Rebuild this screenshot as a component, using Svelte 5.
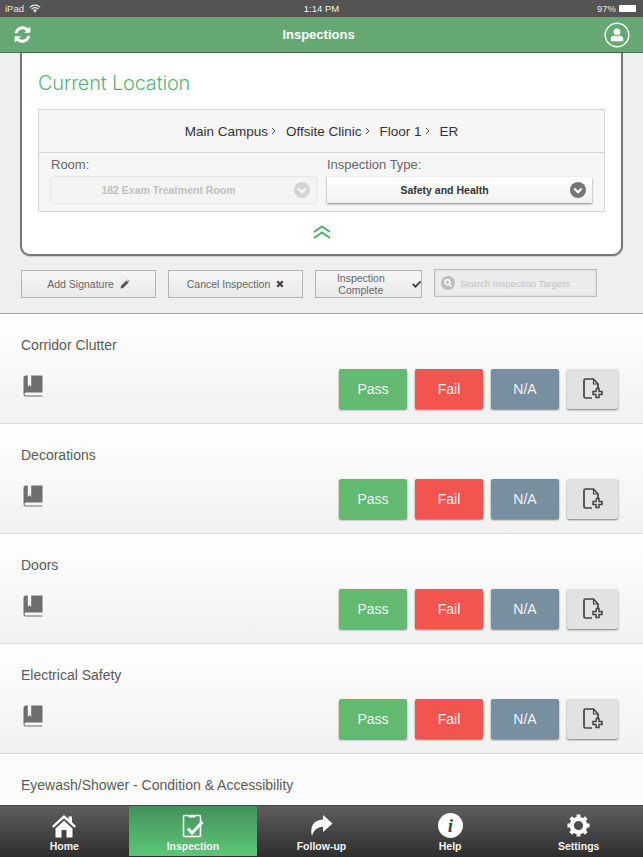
<script>
	const crumbs = ['Main Campus', 'Offsite Clinic', 'Floor 1', 'ER'];
	const targets = ['Corridor Clutter', 'Decorations', 'Doors', 'Electrical Safety'];
	const tabs = ['Home', 'Inspection', 'Follow-up', 'Help', 'Settings'];
</script>

<div class="screen">
	<div class="status">
		<div class="status-left">
			<span>iPad</span>
			<svg class="wifi" viewBox="0 0 14 10" width="12" height="9">
				<path d="M1 3.6a8.5 8.5 0 0 1 12 0M3 5.6a5.6 5.6 0 0 1 8 0M5 7.4a2.8 2.8 0 0 1 4 0" fill="none" stroke="#eee" stroke-width="1.3" />
				<path d="M7 10L5.6 8.4a2 2 0 0 1 2.8 0z" fill="#eee" />
			</svg>
		</div>
		<span class="status-time">1:14 PM</span>
		<div class="status-right">
			<span>97%</span>
			<span class="battery"><span class="battery-fill"></span></span>
		</div>
	</div>

	<header class="header">
		<svg class="sync" viewBox="0 0 24 24" width="21" height="21">
			<path d="M3 10.5C4 5.5 8 2.5 12.2 2.5c2.7 0 4.8 1 6.4 2.6L21 2.800V10h-7.200l2.400-2.400c-1-1-2.400-1.700-4-1.700-2.800 0-5 1.700-5.800 4.600z" fill="#fff" />
			<path d="M21 13.500C20 18.500 16 21.500 11.800 21.500c-2.700 0-4.800-1-6.400-2.600L3 21.200V14h7.200l-2.400 2.400c1 1 2.400 1.700 4 1.700 2.800 0 5-1.700 5.800-4.600z" fill="#fff" />
		</svg>
		<h1>Inspections</h1>
		<svg class="user" viewBox="0 0 26 26" width="26" height="26">
			<circle cx="13" cy="13" r="11.800" fill="none" stroke="#fff" stroke-width="1.400" />
			<circle cx="13" cy="9.800" r="3.400" fill="#fff" />
			<path d="M6.800 19.200v-2.400c0-2.400 2-3.400 3.600-3.400 1.600 1.200 3.600 1.200 5.200 0 1.600 0 3.600 1 3.600 3.400v2.400z" fill="#fff" />
		</svg>
	</header>

	<section class="top">
		<div class="card">
			<h2>Current Location</h2>
			<div class="location">
				<div class="crumbs">
					{#each crumbs as crumb, i}
						<span class="crumb">{crumb}</span>
						{#if i < crumbs.length - 1}
							<svg class="crumb-sep" viewBox="0 0 5 8" width="5" height="8">
								<path d="M1 1l3 3-3 3" fill="none" stroke="#555" stroke-width="1" />
							</svg>
						{/if}
					{/each}
				</div>
				<div class="selects">
					<div class="field">
						<span class="field-label">Room:</span>
						<div class="select disabled">
							<span>182 Exam Treatment Room</span>
							<svg viewBox="0 0 16 16" width="16" height="16">
								<circle cx="8" cy="8" r="8" fill="#d4d4d4" />
								<path d="M4.300 6.500L8 10.200l3.700-3.700" fill="none" stroke="#fff" stroke-width="2.200" />
							</svg>
						</div>
					</div>
					<div class="field">
						<span class="field-label">Inspection Type:</span>
						<div class="select">
							<span>Safety and Health</span>
							<svg viewBox="0 0 16 16" width="16" height="16">
								<circle cx="8" cy="8" r="8" fill="#757575" />
								<path d="M4.300 6.500L8 10.200l3.700-3.700" fill="none" stroke="#fff" stroke-width="2.200" />
							</svg>
						</div>
					</div>
				</div>
			</div>
			<svg class="collapse" viewBox="0 0 20 14" width="20" height="14">
				<path d="M2 7l8-5.500L18 7M2 13l8-5.500L18 13" fill="none" stroke="#4caf6a" stroke-width="2" />
			</svg>
		</div>

		<div class="actions">
			<button class="action">
				Add Signature
				<svg viewBox="0 0 12 12" width="10" height="10">
					<path d="M0.500 11.500l0.800-3.300 6.500-6.500 2.500 2.500-6.500 6.500zM8.600 0.900l0.700-0.400 2.200 2.200-0.400 0.700z" fill="#555" />
				</svg>
			</button>
			<button class="action">
				Cancel Inspection
				<svg viewBox="0 0 10 10" width="8" height="8">
					<path d="M1.500 1.500l7 7M8.500 1.500l-7 7" stroke="#444" stroke-width="2.800" />
				</svg>
			</button>
			<button class="action">
				Inspection Complete
				<svg viewBox="0 0 12 10" width="10" height="8">
					<path d="M1 5l3.500 3.500L11 1.500" fill="none" stroke="#444" stroke-width="2.400" />
				</svg>
			</button>
			<div class="search">
				<svg viewBox="0 0 14 14" width="14" height="14">
					<circle cx="7" cy="7" r="7" fill="#bdbdbd" />
					<circle cx="6.500" cy="6.300" r="2.500" fill="none" stroke="#fff" stroke-width="1.400" />
					<path d="M8.300 8.200l2 2" stroke="#fff" stroke-width="1.500" />
				</svg>
				<span>Search Inspection Targets</span>
			</div>
		</div>
	</section>

	<main class="list">
		{#each targets as target}
			<article class="row">
				<h3>{target}</h3>
				<div class="row-body">
					<svg class="book" viewBox="0 0 20 23" width="20" height="23">
						<path d="M0.500 3a2.500 2.500 0 0 1 2.500-2.500h1.800v11.500l1.700-1.900 1.700 1.900V0.500h11.300v17H3a1.500 1.500 0 0 0 0 3h16.300v1H3A2.500 2.500 0 0 1 0.500 19z" fill="#6e6e6e" />
					</svg>
					<div class="result-buttons">
						<button class="result pass">Pass</button>
						<button class="result fail">Fail</button>
						<button class="result na">N/A</button>
						<button class="result note" aria-label="Add note">
							<svg viewBox="0 0 22 24" width="22" height="24">
								<path d="M10 21H3.500A1.500 1.500 0 0 1 2 19.500v-16A1.500 1.500 0 0 1 3.500 2h8L16 7v4" fill="none" stroke="#444" stroke-width="1.700" />
								<path d="M11.500 2v5H16" fill="none" stroke="#444" stroke-width="1.200" />
								<path d="M14.500 11.500h2.500v3h3v3h-3v3h-3v-3h-3v-3h3z" fill="#e0e0e0" stroke="#444" stroke-width="1.500" />
							</svg>
						</button>
					</div>
				</div>
			</article>
		{/each}
		<article class="row last">
			<h3>Eyewash/Shower - Condition &amp; Accessibility</h3>
		</article>
	</main>

	<nav class="tabs">
		{#each tabs as tab}
			<div class="tab" class:active={tab === 'Inspection'}>
				{#if tab === 'Home'}
					<svg viewBox="0 0 26 24" width="26" height="24">
						<path d="M13 1L1 12l1.500 1.700L13 4.200l10.500 9.500L25 12l-4-3.700V2.500h-3.500v2.600z" fill="#fff" />
						<path d="M4.500 14.500L13 6.800l8.500 7.700V23.500H15.500V16h-5v7.500H4.500z" fill="#fff" />
					</svg>
				{:else if tab === 'Inspection'}
					<svg viewBox="0 0 22 26" width="22" height="26">
						<path d="M7 3.500H2.500a1 1 0 0 0-1 1V23.500a1 1 0 0 0 1 1h15a1 1 0 0 0 1-1V4.500a1 1 0 0 0-1-1H13" fill="none" stroke="#fff" stroke-width="1.500" />
						<path d="M6.500 5.500v-2.500h2.300a1.300 1.300 0 0 1 2.400 0h2.300v2.500z" fill="#fff" />
						<path d="M6 16.500l4 4.500 10.500-11" fill="none" stroke="#fff" stroke-width="3" />
					</svg>
				{:else if tab === 'Follow-up'}
					<svg viewBox="0 0 24 24" width="24" height="24">
						<path d="M14 1l9.500 8.500L14 18v-5C9 13 5 15 3 22 .5 13 4.500 6 14 5.500z" fill="#fff" />
					</svg>
				{:else if tab === 'Help'}
					<svg viewBox="0 0 25 25" width="25" height="25">
						<circle cx="12.500" cy="12.500" r="12.500" fill="#fff" />
						<text class="help-i" x="12.500" y="19" text-anchor="middle">i</text>
					</svg>
				{:else}
					<svg viewBox="0 0 26 26" width="25" height="25">
						<circle cx="13" cy="13" r="7" fill="none" stroke="#fff" stroke-width="4.400" />
						<path d="M13 13V1.500M13 13V24.500M13 13H1.500M13 13H24.500M13 13L4.900 4.900M13 13L21.100 21.100M13 13L21.100 4.900M13 13L4.900 21.100" stroke="#fff" stroke-width="4" stroke-dasharray="3.600 20" stroke-dashoffset="-8.200" />
					</svg>
				{/if}
				<span>{tab}</span>
			</div>
		{/each}
	</nav>
</div>

<style>
	:global(body) {
		margin: 0;
	}

	.screen {
		width: 643px;
		height: 857px;
		display: flex;
		flex-direction: column;
		overflow: hidden;
		background: #fff;
		font-family: 'Liberation Sans', Arial, sans-serif;
	}

	.status {
		height: 17px;
		flex: none;
		display: grid;
		grid-template-columns: 1fr auto 1fr;
		align-items: center;
		padding: 0 5px;
		background: #545454;
		color: #e8e8e8;
		font-size: 9.500px;
	}

	.status-left {
		display: flex;
		align-items: center;
		gap: 5px;
	}

	.status-time {
		color: #f2f2f2;
	}

	.status-right {
		display: flex;
		align-items: center;
		justify-content: flex-end;
		gap: 3px;
		padding-right: 2px;
	}

	.battery {
		width: 17px;
		height: 7px;
		background: #fff;
		border-radius: 1px;
	}

	.battery-fill {
		display: block;
	}

	.header {
		height: 36px;
		flex: none;
		box-sizing: border-box;
		display: flex;
		align-items: center;
		justify-content: space-between;
		padding: 0 13px 0 12px;
		background: #66a874;
		border-bottom: 1px solid #47704f;
		position: relative;
		z-index: 1;
	}

	.header h1 {
		margin: 0;
		color: #fff;
		font-size: 13px;
		font-weight: 700;
	}

	.top {
		height: 261px;
		flex: none;
		box-sizing: border-box;
		padding: 0 20px;
		background: #efefef;
		border-bottom: 1px solid #a6a6a6;
	}

	.card {
		box-sizing: border-box;
		height: 203px;
		background: #fff;
		border: 2px solid #777;
		border-top: none;
		border-radius: 0 0 10px 10px;
		box-shadow: 0 1px 1px rgba(0, 0, 0, 0.15);
		padding: 0 16px;
		display: flex;
		flex-direction: column;
	}

	.card h2 {
		margin: 18px 0 14px;
		color: #5fb07c;
		font-size: 20px;
		font-weight: 400;
		font-family: Inter, 'Liberation Sans', sans-serif;
		font-weight: 300;
		line-height: 24px;
		letter-spacing: -0.2px;
	}

	.location {
		box-sizing: border-box;
		height: 103px;
		background: #f6f6f6;
		border: 1px solid #d6d6d6;
	}

	.crumbs {
		height: 43px;
		box-sizing: border-box;
		border-bottom: 1px solid #d6d6d6;
		display: flex;
		align-items: center;
		justify-content: center;
		color: #333;
		font-size: 13.500px;
	}

	.crumb-sep {
		margin: 0 10px 0 3px;
	}

	.selects {
		display: flex;
		padding: 0 12px;
		gap: 11px;
	}

	.field {
		flex: 1;
		min-width: 0;
	}

	.field-label {
		display: block;
		margin-top: 4px;
		color: #666;
		font-size: 13px;
		line-height: 16px;
	}

	.select {
		box-sizing: border-box;
		margin-top: 4px;
		height: 26px;
		display: flex;
		align-items: center;
		justify-content: center;
		position: relative;
		padding-right: 30px;
		background: linear-gradient(#fff, #f1f1f1);
		box-shadow: 0 1px 2px rgba(0, 0, 0, 0.45);
		color: #333;
		font-size: 10.500px;
		font-weight: 700;
	}

	.select svg {
		position: absolute;
		right: 6px;
		top: 5px;
	}

	.select.disabled {
		color: #c0c0c0;
		background: #f4f4f4;
		box-shadow: 0 0 2px rgba(0, 0, 0, 0.18);
	}

	.collapse {
		align-self: center;
		margin-top: 13px;
	}

	.actions {
		display: flex;
		align-items: flex-start;
		margin: 14px 0 0 1px;
		gap: 12px;
	}

	.action {
		box-sizing: border-box;
		width: 135px;
		height: 28px;
		padding: 0;
		display: flex;
		align-items: center;
		justify-content: center;
		gap: 6px;
		border: 1px solid #b4b4b4;
		background: linear-gradient(#f6f6f6, #e9e9e9);
		color: #666;
		font-family: inherit;
		font-size: 10.500px;
	}

	.action:nth-child(3) {
		width: 107px;
	}

	.search {
		box-sizing: border-box;
		width: 163px;
		height: 28px;
		margin: -1px 0 0 0;
		padding-left: 6px;
		display: flex;
		align-items: center;
		gap: 5px;
		border: 1px solid #bdbdbd;
		background: #ececec;
		box-shadow: inset 0 0 3px rgba(0, 0, 0, 0.12);
		color: #c2c2c2;
		font-size: 9.500px;
	}

	.list {
		flex: 1;
		min-height: 0;
	}

	.row {
		box-sizing: border-box;
		height: 110px;
		padding: 0 25px 0 21px;
		background: linear-gradient(#fff, #f1f1f1);
		border-bottom: 1px solid #dedede;
	}

	.row.last {
		height: 50px;
		background: #fcfcfc;
		border-bottom: none;
	}

	.row h3 {
		margin: 0;
		padding-top: 23px;
		color: #5a5a5a;
		font-size: 14px;
		font-weight: 400;
		line-height: 17px;
	}

	.row-body {
		display: flex;
		align-items: center;
		justify-content: space-between;
		margin-top: 15px;
	}

	.book {
		margin: -5px 0 0 2px;
	}

	.result-buttons {
		display: flex;
		gap: 8px;
	}

	.result {
		width: 68px;
		height: 40px;
		padding: 0;
		border: none;
		border-radius: 2px;
		box-shadow: 0 1px 2px rgba(0, 0, 0, 0.5);
		color: #f4f4f4;
		font-family: inherit;
		font-size: 14px;
	}

	.pass {
		background: #62b970;
	}

	.fail {
		background: #f25450;
	}

	.na {
		background: #778f9e;
	}

	.note {
		width: 51px;
		background: #e2e2e2;
		display: flex;
		align-items: center;
		justify-content: center;
	}

	.tabs {
		height: 52px;
		flex: none;
		display: grid;
		grid-template-columns: repeat(5, 1fr);
		background: linear-gradient(#5e5e5e, #2e2e2e);
		border-top: 1px solid #444;
		box-sizing: border-box;
		padding-bottom: 1px;
		position: relative;
	}

	.tab {
		display: flex;
		flex-direction: column;
		align-items: center;
		justify-content: flex-end;
		padding-bottom: 4px;
		gap: 2px;
		color: #f4f4f4;
		font-size: 10.500px;
		font-weight: 700;
	}

	.tab.active {
		background: linear-gradient(#43915a, #5cc777);
	}

	.help-i {
		font-family: 'Liberation Serif', serif;
		font-style: italic;
		font-weight: 700;
		font-size: 19px;
		fill: #444;
	}
</style>
